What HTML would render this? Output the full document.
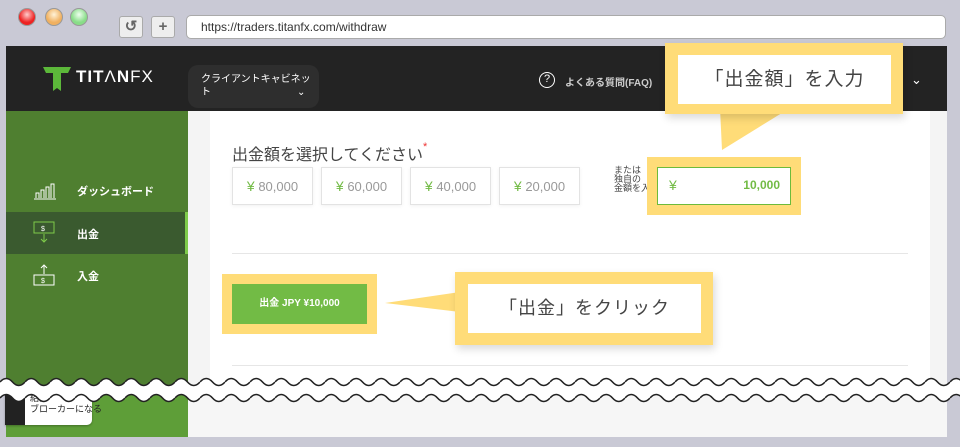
<!DOCTYPE html>
<html><head><meta charset="utf-8"><style>
*{margin:0;padding:0;box-sizing:border-box}
body{width:960px;height:447px;overflow:hidden;background:#c9c9d5;font-family:"Liberation Sans","Noto Sans CJK JP",sans-serif;position:relative}
.a{position:absolute}
.dot{width:18px;height:18px;border-radius:50%;top:8px;border:1px solid #999}
.tb{top:16px;width:24px;height:22px;background:#eee;border:1px solid #aaa;border-radius:3px;font-size:15px;color:#666;text-align:center;line-height:20px;font-weight:bold}
.amt{top:167px;width:81px;height:38px;background:#fff;border:1px solid #e3e3e3;box-shadow:0 1px 4px rgba(0,0,0,.06);color:#999;font-size:13px;text-align:center;line-height:36px}
.amt b{color:#72bb45;font-weight:normal;font-size:14px}
.si{color:#fff;font-size:11px;font-weight:bold;left:77px}
</style></head><body>
<div class="a dot" style="left:18px;background:radial-gradient(circle at 50% 35%,#fcc,#e22 60%)"></div>
<div class="a dot" style="left:45px;background:radial-gradient(circle at 50% 35%,#fff3d8,#f0b060 60%)"></div>
<div class="a dot" style="left:70px;background:radial-gradient(circle at 50% 35%,#efe,#8d8 60%)"></div>
<div class="a tb" style="left:119px">↺</div>
<div class="a tb" style="left:151px">+</div>
<div class="a" style="left:186px;top:15px;width:760px;height:24px;background:#fff;border:1px solid #aaa;border-radius:5px;font-size:12px;color:#333;padding:4px 0 0 14px">https://traders.titanfx.com/withdraw</div>

<div class="a" style="left:6px;top:46px;width:941px;height:391px;background:#f4f4f4"></div>
<div class="a" style="left:6px;top:46px;width:941px;height:65px;background:#232323"></div>
<svg class="a" style="left:42px;top:65px" width="30" height="28" viewBox="0 0 30 28"><path d="M1 2h28l-3 6h-7v18l-4 -3l-4 3v-18h-7z" fill="#5cb83a"/></svg>
<div class="a" style="left:76px;top:67px;color:#fff;font-weight:bold;font-size:17px;letter-spacing:1px">TIT<span style="font-weight:normal">Λ</span>N<span style="font-weight:normal">FX</span></div>
<div class="a" style="left:188px;top:65px;width:131px;height:43px;background:#2e2e2e;border-radius:10px;color:#fff;font-size:10px;padding:8px 0 0 13px;line-height:13px">クライアントキャビネッ<br><span style="margin-left:-13px;padding-left:13px">ト</span><span style="margin-left:86px">⌄</span></div>
<div class="a" style="left:539px;top:72px;width:16px;height:16px;border:1.5px solid #fff;border-radius:50%;color:#fff;font-size:11px;text-align:center;line-height:13px">?</div>
<div class="a" style="left:565px;top:74px;color:#ccc;font-size:10px;font-weight:bold">よくある質問(FAQ)</div>
<div class="a" style="left:911px;top:72px;color:#fff;font-size:13px">⌄</div>

<div class="a" style="left:6px;top:111px;width:182px;height:275px;background:#4f7f30"></div>
<div class="a" style="left:6px;top:212px;width:182px;height:42px;background:#3a5a2f"></div>
<div class="a" style="left:185px;top:212px;width:3px;height:42px;background:#7ecb4a"></div>
<svg class="a" style="left:33px;top:180px" width="24" height="20"><path d="M1 19h22M3 18v-5h3v5M8 18v-8h3v8M13 18v-11h3v11M18 18v-14h3v14" stroke="#fff" fill="none" stroke-width="1"/></svg>
<div class="a si" style="top:183px">ダッシュボード</div>
<svg class="a" style="left:33px;top:221px" width="24" height="24"><rect x="1" y="1" width="20" height="11" stroke="#7ecb4a" fill="none"/><text x="8" y="10" fill="#fff" font-size="7">$</text><path d="M11 13v8M8 18l3 3l3-3" stroke="#7ecb4a" fill="none"/></svg>
<div class="a si" style="top:226px">出金</div>
<svg class="a" style="left:33px;top:263px" width="24" height="24"><path d="M11 11v-9M8 5l3-3l3 3" stroke="#fff" fill="none"/><rect x="1" y="12" width="20" height="10" stroke="#fff" fill="none"/><text x="8" y="20" fill="#fff" font-size="7">$</text></svg>
<div class="a si" style="top:268px">入金</div>

<div class="a" style="left:210px;top:111px;width:720px;height:326px;background:#fff"></div>
<div class="a" style="left:232px;top:141px;font-size:16px;color:#444">出金額を選択してください<span style="color:#e33;font-size:11px;vertical-align:top">*</span></div>
<div class="a amt" style="left:232px"><b>¥</b> 80,000</div>
<div class="a amt" style="left:321px"><b>¥</b> 60,000</div>
<div class="a amt" style="left:410px"><b>¥</b> 40,000</div>
<div class="a amt" style="left:499px"><b>¥</b> 20,000</div>
<div class="a" style="left:614px;top:166px;font-size:9px;line-height:9px;color:#444">または<br>独自の<br>金額を入</div>
<div class="a" style="left:647px;top:157px;width:154px;height:58px;background:#ffdc78"></div>
<div class="a" style="left:657px;top:167px;width:134px;height:38px;background:#fff;border:1.5px solid #6cbb3c;color:#72bb45;font-size:13px;line-height:35px"><span style="position:absolute;left:11px;font-size:14px">¥</span><span style="position:absolute;right:10px;font-weight:bold;font-size:12px">10,000</span></div>
<div class="a" style="left:232px;top:253px;width:676px;height:1px;background:#e6e6e6"></div>
<div class="a" style="left:232px;top:365px;width:676px;height:1px;background:#e6e6e6"></div>

<div class="a" style="left:222px;top:274px;width:155px;height:60px;background:#ffdc78"></div>
<div class="a" style="left:232px;top:284px;width:135px;height:40px;background:#72bb45;color:#fff;font-size:10px;font-weight:bold;text-align:center;line-height:40px">出金 JPY ¥10,000</div>

<svg class="a" style="left:380px;top:290px" width="80" height="30"><polygon points="5,13 80,2 80,22" fill="#ffdc78"/></svg>
<div class="a" style="left:455px;top:272px;width:258px;height:73px;background:#ffdc78;box-shadow:2px 4px 8px rgba(0,0,0,.15)"></div>
<div class="a" style="left:468px;top:284px;width:233px;height:49px;background:#fff;font-size:18px;color:#444;text-align:center;line-height:49px;letter-spacing:1px">「出金」をクリック</div>

<svg class="a" style="left:700px;top:108px" width="90" height="45"><polygon points="20,0 90,0 22,42" fill="#ffdc78"/></svg>
<div class="a" style="left:665px;top:43px;width:238px;height:71px;background:#ffdc78;box-shadow:2px 4px 8px rgba(0,0,0,.15)"></div>
<div class="a" style="left:678px;top:55px;width:213px;height:49px;background:#fff;font-size:19px;color:#444;text-align:center;line-height:49px;letter-spacing:1px">「出金額」を入力</div>

<div class="a" style="left:6px;top:392px;width:182px;height:45px;background:#5e9e38"></div>
<div class="a" style="left:188px;top:392px;width:759px;height:45px;background:#f6f6f6"></div>
<div class="a" style="left:5px;top:385px;width:87px;height:40px;background:#fff;border-radius:0 0 5px 0;box-shadow:0 1px 2px rgba(0,0,0,.3)"></div>
<div class="a" style="left:5px;top:385px;width:20px;height:40px;background:#222"></div>
<div class="a" style="left:30px;top:393px;font-size:9px;color:#222;line-height:11px">紹介<br>ブローカーになる</div>
<svg class="a" style="left:0;top:372px" width="960" height="36">
<defs><pattern id="w" width="25" height="36" patternUnits="userSpaceOnUse"><path d="M0 10 Q6.25 3 12.5 10 T25 10 V26 Q18.75 33 12.5 26 T0 26 Z" fill="#fff"/><path d="M0 10 Q6.25 3 12.5 10 T25 10 M0 26 Q6.25 19 12.5 26 T25 26" stroke="#222" stroke-width="1.6" fill="none"/></pattern></defs>
<rect width="960" height="36" fill="url(#w)"/></svg>
</body></html>
